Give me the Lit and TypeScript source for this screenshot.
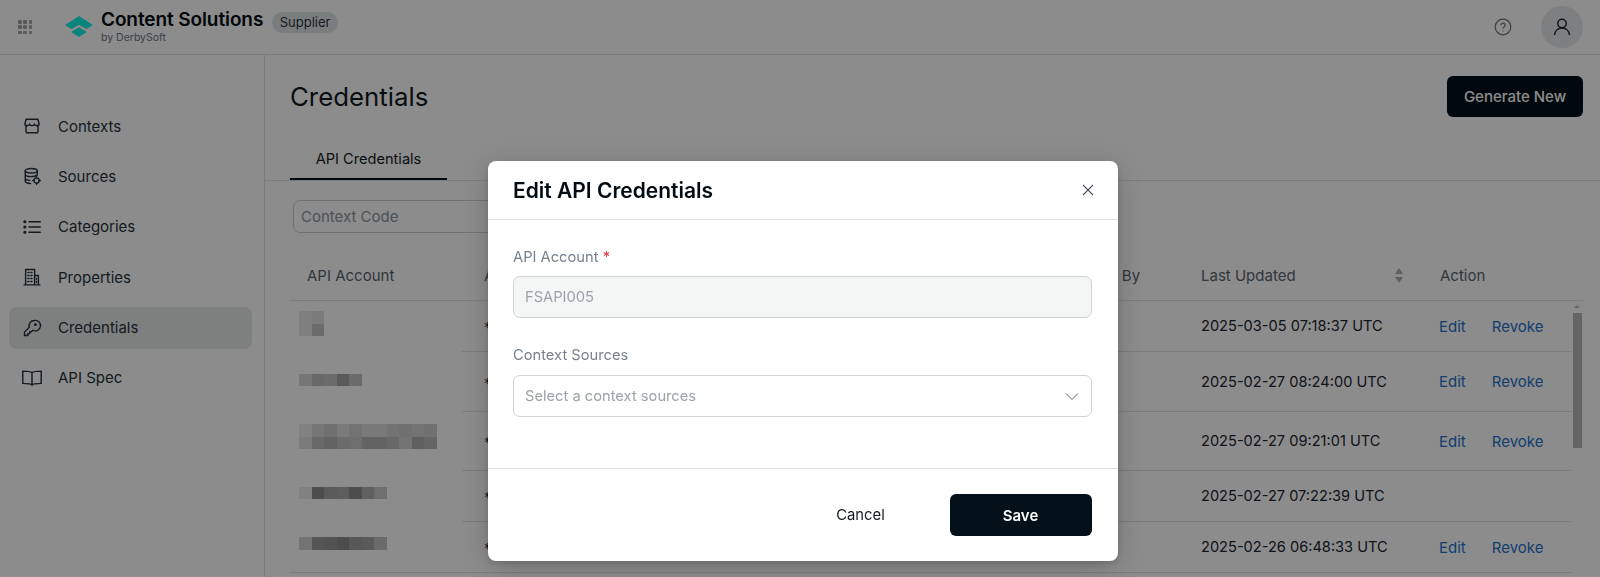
import { LitElement, html, css, svg } from "lit";
import { customElement } from "lit/decorators.js";

const navIcons: Record<string, unknown> = {
  Contexts: svg`<path d="M4.200 3h15.600l1.700 6c0 1.500-1.300 2.600-3 2.600-1.600 0-3-1-3.200-2.400-.3 1.400-1.600 2.400-3.300 2.400s-3-1-3.300-2.400c-.2 1.400-1.600 2.400-3.200 2.400-1.700 0-3-1.100-3-2.600z" /><path d="M4 11v8.500A1.500 1.500 0 0 0 5.500 21h13a1.500 1.500 0 0 0 1.500-1.500V11" />`,
  Sources: svg`<ellipse cx="11" cy="5" rx="8" ry="3" /><path d="M3 5v14c0 1.500 3 2.800 7 3M19 5v5M3 10c0 1.500 3 2.800 8 2.800 3.500 0 6.500-.8 8-2.300M3 15c0 1.500 2.500 2.600 6 2.800" /><circle cx="18" cy="18" r="3.500" /><path d="M18 13v1.500M18 21.500V23M13 18h1.500M21.500 18H23" />`,
  Categories: svg`<path d="M8 5h15M8 12h15M8 19h15" /><circle cx="2.500" cy="5" r="1.200" fill="currentColor" /><circle cx="2.500" cy="12" r="1.200" fill="currentColor" /><circle cx="2.500" cy="19" r="1.200" fill="currentColor" />`,
  Properties: svg`<path d="M1.500 22.500h21M3.500 22V2h12v20M15.500 10h5v12" /><path d="M6.500 6h1.500M10.500 6H12M6.500 10H8M10.500 10H12M6.500 14H8M10.500 14H12M6.500 18H8M10.500 18H12M18 14v1M18 18v1" />`,
  Credentials: svg`<path d="M15 2a7 7 0 0 0-6.700 9L2 17.500V22h4.500v-2.500H9V17h2l2-2a7 7 0 1 0 2-13z" /><circle cx="16.500" cy="7.500" r="1" fill="currentColor" />`,
  "API Spec": svg`<path d="M12 5C10.500 3.500 7 2.800-.3 2.800v16.400c7.300 0 10.800.7 12.300 2.300 1.500-1.600 5-2.300 12.300-2.300V2.800C17 2.800 13.500 3.500 12 5zM12 5v16.500" />`,
};

const nav = ["Contexts", "Sources", "Categories", "Properties", "Credentials", "API Spec"];

const gray = (v: number) => `rgb(${v},${v},${v})`;
const rows = [
  { time: "2025-03-05 07:18:37 UTC", actions: true, offset: 6, height: 51, mosaic: [[232, 225], [232, 195]] },
  { time: "2025-02-27 08:24:00 UTC", actions: true, offset: 4, height: 60, mosaic: [[215, 190, 195, 165, 195]] },
  { time: "2025-02-27 09:21:01 UTC", actions: true, offset: 10, height: 59, mosaic: [[235, 215, 205, 222, 210, 220, 220, 210, 205, 212, 205], [225, 190, 180, 195, 200, 180, 180, 190, 212, 175, 185]] },
  { time: "2025-02-27 07:22:39 UTC", actions: false, offset: 7, height: 51, mosaic: [[235, 140, 165, 170, 140, 175, 200]] },
  { time: "2025-02-26 06:48:33 UTC", actions: true, offset: 7, height: 51, mosaic: [[210, 155, 150, 140, 160, 165, 195]] },
];

@customElement("app-root")
export class AppRoot extends LitElement {
  static styles = css`
    :host { display: block; height: 577px; overflow: hidden; position: relative; background: #fff; font-family: Inter, "Noto Sans", sans-serif; font-size: 15px; color: #1a2530; }
    .topbar { height: 54px; border-bottom: 1px solid #dfe2e5; display: flex; align-items: center; padding: 0 17px 0 18px; }
    .apps { width: 14px; height: 14px; display: grid; grid-template-columns: repeat(3, 3.500px); gap: 1.750px; margin-right: 33px; }
    .apps i { background: #a0a4a8; border-radius: 1px; width: 3.500px; height: 3.500px; }
    .logo { width: 28px; height: 22px; margin-right: 8px; overflow: visible; }
    .brand { display: flex; flex-direction: column; margin-right: 9px; margin-bottom: 1.500px; }
    .brand b { font-size: 19px; line-height: 24px; font-weight: 600; color: #020c12; letter-spacing: -.1px; }
    .brand span { font-size: 10.500px; line-height: 12px; font-weight: 400; color: #6b7580; }
    .badge { height: 21px; line-height: 21px; padding: 0 7.500px; border-radius: 11px; background: #dfe3e6; font-size: 13px; color: #2a3540; margin-bottom: 10px; }
    .spacer { flex: 1; }
    .help { width: 18px; height: 18px; color: #6b7580; margin-right: 29px; }
    .avatar { width: 42px; height: 42px; border-radius: 50%; background: #e6e8e9; display: flex; align-items: center; justify-content: center; color: #1a2530; }
    .layout { display: flex; height: 522px; }
    .side { flex: none; box-sizing: border-box; width: 265px; border-right: 1px solid #dfe2e5; padding: 50px 12px 0 9px; display: flex; flex-direction: column; gap: 8.400px; }
    .item { height: 42px; display: flex; align-items: center; padding-left: 14px; gap: 17px; border-radius: 8px; color: #26323c; }
    .item.active { background: #e5e8e7; }
    .item svg { width: 18px; height: 18px; flex: none; overflow: visible; }
    .main { flex: 1; padding: 21px 17px 0 25px; min-width: 0; }
    .title { display: flex; justify-content: space-between; align-items: center; height: 41px; }
    h1 { margin: 0; font-size: 25.800px; font-weight: 400; color: #111a22; }
    .gen { height: 41px; width: 136px; border: 0; border-radius: 6px; background: #04111a; color: #fff; font: 500 15px Inter, sans-serif; }
    .tabs { margin: 21px -17px 0 -25px; padding-left: 25px; height: 42px; border-bottom: 1px solid #dfe2e5; }
    .tab { width: 157px; height: 42px; box-sizing: border-box; border-bottom: 2px solid #04111a; text-align: center; line-height: 42px; font-size: 14.600px; color: #111a22; margin-bottom: -1px; }
    .filter { display: block; margin: 19px 0 0 3px; width: 300px; height: 33px; box-sizing: border-box; border: 1px solid #c9ced3; border-radius: 7px; padding: 0 7px; line-height: 31px; color: #8b959e; }
    .thead, .row { display: grid; grid-template-columns: 177px 573px 144px 239px 148px; }
    .thead { height: 50px; margin-top: 18px; align-items: center; border-bottom: 1px solid #dfe2e5; box-sizing: border-box; color: #5a6570; }
    .thead > div { padding: 0 17px; display: flex; align-items: center; justify-content: space-between; }
    .sort { display: flex; flex-direction: column; gap: 3px; margin-right: 3px; }
    .sort i { width: 0; height: 0; border-left: 4.500px solid transparent; border-right: 4.500px solid transparent; }
    .sort i:first-child { border-bottom: 6px solid #a8adb1; }
    .sort i:last-child { border-top: 6px solid #a8adb1; }
    .body { display: flex; }
    .rows { width: 1281px; flex: none; }
    .row { box-sizing: border-box; }
    .row > div { display: flex; align-items: center; padding-left: 17px; border-bottom: 1px solid #dfe2e5; }
    .row > .first { border-bottom: 0; padding-left: 9px; margin-right: 5px; }
    .row:last-child > .first { border-bottom: 1px solid #dfe2e5; margin-right: 0; }
    .row > .key { padding: 3px 0 0 22px; margin-left: -5px; }
    .row > .time { font-size: 14.600px; }
    .row > .acts { padding-left: 16px; }
    .mosaic { display: grid; grid-auto-rows: 12.500px; grid-auto-flow: row; }
    .mosaic div { display: flex; }
    .mosaic i { width: 12.500px; height: 12.500px; }
    .link { color: #1f72ca; }
    .link + .link { margin-left: 26px; }
    .track { width: 12px; display: flex; flex-direction: column; align-items: center; padding-top: 4px; flex: none; }
    .up { width: 0; height: 0; border-left: 3px solid transparent; border-right: 3px solid transparent; border-bottom: 3px solid #b9bcbe; margin-bottom: 5px; }
    .thumb { width: 9px; height: 135px; background: #b9b9b9; margin-left: 1px; }
    .overlay { position: fixed; inset: 0; background: rgba(0,0,0,.45); display: flex; justify-content: center; align-items: flex-start; padding: 161px 0 0 5px; box-sizing: border-box; }
    .modal { width: 630px; height: 400px; background: #fff; border-radius: 8px; box-shadow: 0 6px 30px rgba(0,0,0,.2), 0 3px 6px rgba(0,0,0,.12); display: flex; flex-direction: column; }
    .mhead { height: 58px; border-bottom: 1px solid #dfe2e5; display: flex; align-items: center; justify-content: space-between; padding: 0 23px 0 25.500px; flex: none; }
    .mhead h2 { margin: 0; font-size: 21px; font-weight: 600; color: #020c12; }
    .mhead svg { width: 14px; height: 14px; color: #4a5560; }
    .mbody { flex: 1; padding: 28px 26px 0 25px; }
    .label { font-size: 14.700px; line-height: 18px; color: #76828e; margin-bottom: 10px; padding-left: .5px; }
    .label.second { margin-bottom: 11px; }
    .label em { color: #e5343d; font-style: normal; }
    .field { height: 42px; box-sizing: border-box; border: 1px solid #cfd4d8; border-radius: 7px; padding: 0 11px 0 11.500px; display: flex; align-items: center; justify-content: space-between; color: #9aa3ab; font-size: 14.700px; margin-bottom: 28px; }
    .field.off { background: #f4f6f5; }
    .field svg { width: 14px; height: 14px; color: #5a6570; margin-right: 1px; }
    .mfoot { height: 93px; border-top: 1px solid #dfe2e5; display: flex; align-items: flex-start; justify-content: flex-end; padding: 25px 26px 0 0; flex: none; box-sizing: border-box; }
    .cancel { width: 142px; height: 42px; line-height: 42px; text-align: center; color: #111a22; font-size: 14.800px; margin-right: 18px; }
    .save { width: 142px; height: 42px; border: 0; border-radius: 6px; background: #04111a; color: #fff; font: 600 15px Inter, sans-serif; }
  `;

  render() {
    return html`
      <div class="topbar">
        <div class="apps">${Array.from({ length: 9 }, () => html`<i></i>`)}</div>
        <svg class="logo" viewBox="0 0 28 22" stroke="#17f0e6" stroke-width="1" stroke-linejoin="round"><path d="M.8 9 14 .6 27.200 9l-5.700 3.600L14 8.400l-7.500 4.200z" fill="#17f0e6" /><path d="M6.800 16 14 11.800 21.200 16 14 20.400z" fill="#17f0e6" /></svg>
        <div class="brand"><b>Content Solutions</b><span>by DerbySoft</span></div>
        <div class="badge">Supplier</div>
        <div class="spacer"></div>
        <svg class="help" viewBox="0 0 18 18" fill="none" stroke="currentColor" stroke-width="1.200"><circle cx="9" cy="9" r="7.800" /><path d="M6.900 7.200a2.100 2.100 0 1 1 3.200 1.800c-.7.400-1.100.9-1.100 1.600" /><circle cx="9" cy="12.800" r=".6" fill="currentColor" stroke="none" /></svg>
        <div class="avatar"><svg width="18" height="18" viewBox="0 0 18 18" fill="none" stroke="currentColor" stroke-width="1.500"><circle cx="9" cy="5.500" r="4.200" /><path d="M1.500 17c.5-4 3.500-7 7.500-7s7 3 7.500 7" /></svg></div>
      </div>
      <div class="layout">
        <div class="side">
          ${nav.map((n) => html`<div class="item ${n === "Credentials" ? "active" : ""}"><svg viewBox="0 0 24 24" fill="none" stroke="currentColor" stroke-width="1.900" stroke-linecap="round" stroke-linejoin="round">${navIcons[n]}</svg><span>${n}</span></div>`)}
        </div>
        <div class="main">
          <div class="title"><h1>Credentials</h1><button class="gen">Generate New</button></div>
          <div class="tabs"><div class="tab">API Credentials</div></div>
          <div class="filter">Context Code</div>
          <div class="thead">
            <div>API Account</div><div>API Key</div><div>Updated By</div>
            <div>Last Updated<span class="sort"><i></i><i></i></span></div><div>Action</div>
          </div>
          <div class="body">
            <div class="rows">
              ${rows.map((r) => html`<div class="row" style="height:${r.height}px">
                <div class="first"><div class="mosaic" style="margin-bottom:${r.offset}px">${r.mosaic.map((m) => html`<div>${m.map((v) => html`<i style="background:${gray(v)}"></i>`)}</div>`)}</div></div>
                <div class="key">********</div><div></div>
                <div class="time">${r.time}</div>
                <div class="acts">${r.actions ? html`<span class="link">Edit</span><span class="link">Revoke</span>` : ""}</div>
              </div>`)}
            </div>
            <div class="track"><div class="up"></div><div class="thumb"></div></div>
          </div>
        </div>
      </div>
      <div class="overlay">
        <div class="modal">
          <div class="mhead"><h2>Edit API Credentials</h2><svg viewBox="0 0 14 14" fill="none" stroke="currentColor" stroke-width="1.100"><path d="M2 2l10 10M12 2 2 12" /></svg></div>
          <div class="mbody">
            <div class="label">API Account <em>*</em></div>
            <div class="field off">FSAPI005</div>
            <div class="label second">Context Sources</div>
            <div class="field">Select a context sources<svg viewBox="0 0 14 14" fill="none" stroke="currentColor" stroke-width="1"><path d="M1 4.500 7 10.500l6-6" /></svg></div>
          </div>
          <div class="mfoot"><div class="cancel">Cancel</div><button class="save">Save</button></div>
        </div>
      </div>
    `;
  }
}
